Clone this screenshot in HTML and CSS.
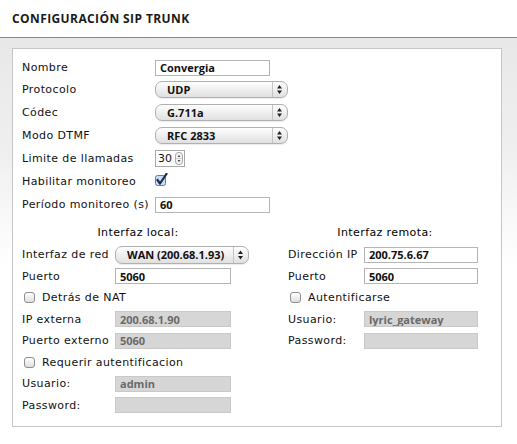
FILE: index.html
```html
<!DOCTYPE html>
<html lang="es">
<head>
  <meta charset="UTF-8">
  <title>Configuración SIP Trunk</title>
  <link rel="stylesheet" href="styles.css">
</head>
<body>
  <h1 class="title">CONFIGURACIÓN SIP TRUNK</h1>

  <div class="content">
    <form class="panel">
      <div class="general">
        <label for="nombre">Nombre</label>
        <input type="text" id="nombre" class="text" value="Convergia">

        <label for="protocolo">Protocolo</label>
        <div class="select">
          <select id="protocolo"><option>UDP</option></select>
          <svg class="arrows" width="16" height="17" viewBox="0 0 16 17"><line x1="0.5" y1="1" x2="0.5" y2="16" stroke="#c4c4c4"/><path d="M5 7.5 L7.5 4 L10 7.5 Z M5 9.5 L7.5 13 L10 9.5 Z" fill="#222"/></svg>
        </div>

        <label for="codec">Códec</label>
        <div class="select">
          <select id="codec"><option>G.711a</option></select>
          <svg class="arrows" width="16" height="17" viewBox="0 0 16 17"><line x1="0.5" y1="1" x2="0.5" y2="16" stroke="#c4c4c4"/><path d="M5 7.5 L7.5 4 L10 7.5 Z M5 9.5 L7.5 13 L10 9.5 Z" fill="#222"/></svg>
        </div>

        <label for="dtmf">Modo DTMF</label>
        <div class="select">
          <select id="dtmf"><option>RFC 2833</option></select>
          <svg class="arrows" width="16" height="17" viewBox="0 0 16 17"><line x1="0.5" y1="1" x2="0.5" y2="16" stroke="#c4c4c4"/><path d="M5 7.5 L7.5 4 L10 7.5 Z M5 9.5 L7.5 13 L10 9.5 Z" fill="#222"/></svg>
        </div>

        <label for="limite">Limite de llamadas</label>
        <div class="spin">
          <input type="text" id="limite" value="30">
          <svg width="9" height="15" viewBox="0 0 9 15"><rect x="0.5" y="0.5" width="8" height="14" rx="4" fill="#f4f4f4" stroke="#9a9a9a"/><line x1="1" y1="7.5" x2="8" y2="7.5" stroke="#c8c8c8"/><path d="M2.8 5.8 L4.5 3.3 L6.2 5.8 Z M2.8 9.2 L4.5 11.7 L6.2 9.2 Z" fill="#555"/></svg>
        </div>

        <label>Habilitar monitoreo</label>
        <svg class="checked" width="13" height="14" viewBox="0 0 13 14"><rect x="0.5" y="2.5" width="10" height="10" rx="2" fill="#c9dcf2" stroke="#5d7fa8"/><path d="M2.5 7 L5 10.5 L11.5 0.8" fill="none" stroke="#1e2f4e" stroke-width="2.2" stroke-linecap="round" stroke-linejoin="round"/></svg>

        <label for="periodo">Período monitoreo (s)</label>
        <input type="text" id="periodo" class="text" value="60">
      </div>

      <div class="interfaces">
        <div class="iface local">
          <h2>Interfaz local:</h2>
          <div class="rows">
            <label for="red">Interfaz de red</label>
            <div class="select wide">
              <select id="red"><option>WAN (200.68.1.93)</option></select>
              <svg class="arrows" width="16" height="18" viewBox="0 0 16 18"><line x1="0.5" y1="1" x2="0.5" y2="17" stroke="#c4c4c4"/><path d="M5 8 L7.5 4.5 L10 8 Z M5 10 L7.5 13.5 L10 10 Z" fill="#222"/></svg>
            </div>

            <label for="puerto-local">Puerto</label>
            <input type="text" id="puerto-local" class="text" value="5060">

            <label class="check-row"><input type="checkbox"> Detrás de NAT</label>

            <label for="ip-externa">IP externa</label>
            <input type="text" id="ip-externa" class="text" value="200.68.1.90" disabled>

            <label for="puerto-externo">Puerto externo</label>
            <input type="text" id="puerto-externo" class="text" value="5060" disabled>

            <label class="check-row"><input type="checkbox"> Requerir autentificacion</label>

            <label for="usuario-local">Usuario:</label>
            <input type="text" id="usuario-local" class="text" value="admin" disabled>

            <label for="password-local">Password:</label>
            <input type="password" id="password-local" class="text" disabled>
          </div>
        </div>

        <div class="iface remote">
          <h2>Interfaz remota:</h2>
          <div class="rows">
            <label for="ip-remota">Dirección IP</label>
            <input type="text" id="ip-remota" class="text" value="200.75.6.67">

            <label for="puerto-remoto">Puerto</label>
            <input type="text" id="puerto-remoto" class="text" value="5060">

            <label class="check-row"><input type="checkbox"> Autentificarse</label>

            <label for="usuario-remoto">Usuario:</label>
            <input type="text" id="usuario-remoto" class="text" value="lyric_gateway" disabled>

            <label for="password-remoto">Password:</label>
            <input type="password" id="password-remoto" class="text" disabled>
          </div>
        </div>
      </div>
    </form>
  </div>
</body>
</html>
```

FILE: styles.css
```css
* {
  box-sizing: border-box;
}

body {
  margin: 0;
  background: #fff;
  font-family: "DejaVu Sans", Verdana, sans-serif;
  font-size: 11px;
  letter-spacing: 0.4px;
  color: #111;
}

.title {
  margin: 0;
  height: 38px;
  padding: 12px 12px 0;
  font-family: "Open Sans", "DejaVu Sans", sans-serif;
  font-size: 12px;
  line-height: 14px;
  font-weight: bold;
  letter-spacing: 0.4px;
  color: #1a1a1a;
  border-bottom: 1px solid #8a8a8a;
}

.content {
  background: linear-gradient(to bottom, #e8e8e9 0, #efefef 110px, #fff 230px);
  padding: 10px 15px 18px 12px;
}

.panel {
  height: 379px;
  border: 1px solid #c6c6c6;
  background: #fff;
  padding: 8px 9px 0;
}

.general {
  display: grid;
  grid-template-columns: 133px auto;
  grid-template-rows: 21px;
  grid-auto-rows: 23px;
  align-items: center;
  justify-items: start;
}

.text {
  width: 115px;
  height: 16px;
  margin: 0;
  padding: 0 4px;
  border: 1px solid #b5b5b5;
  background: #fff;
  font-family: "Open Sans", "DejaVu Sans", sans-serif;
  font-size: 11px;
  font-weight: bold;
  letter-spacing: 0;
  color: #111;
  outline: none;
}

.text:disabled {
  background: #d6d6d6;
  border-color: #c9c9c9;
  color: #6a6a6a;
}

.select {
  position: relative;
  width: 133px;
  height: 17px;
}

.select.wide {
  width: 134px;
  height: 18px;
}

.select select {
  appearance: none;
  width: 100%;
  height: 100%;
  margin: 0;
  padding: 0 0 0 11px;
  border: 1px solid #b0b0b0;
  border-radius: 7px;
  background: linear-gradient(to bottom, #fefefe, #ececec 60%, #e0e0e0);
  box-shadow: 0 1px 1px rgba(0, 0, 0, 0.08);
  font-family: "Open Sans", "DejaVu Sans", sans-serif;
  font-size: 11px;
  font-weight: bold;
  letter-spacing: 0;
  color: #111;
}

.select .arrows {
  position: absolute;
  top: 0;
  right: 0;
  pointer-events: none;
}

.spin {
  display: flex;
  align-items: center;
  justify-content: space-between;
  width: 30px;
  height: 17px;
  padding: 0 1px 0 0;
  border: 1px solid #a8a8a8;
  background: #fff;
}

.spin input {
  width: 19px;
  height: 14px;
  padding: 0 0 0 2px;
  border: none;
  font-family: "DejaVu Sans", Verdana, sans-serif;
  font-size: 11px;
  letter-spacing: 0;
  color: #111;
  outline: none;
}

.checked {
  margin-top: -3px;
}

.interfaces {
  display: flex;
  gap: 34px;
}

.local {
  width: 232px;
}

.remote {
  width: 194px;
}

.iface h2 {
  margin: 0;
  padding: 10px 0 4px;
  font-size: 11px;
  line-height: 14px;
  font-weight: normal;
  text-align: center;
  color: #000;
}

.rows {
  display: grid;
  grid-auto-rows: 21.5px;
  align-items: center;
  justify-items: start;
}

.local .rows {
  grid-template-columns: 93px auto;
}

.local .text {
  width: 116px;
}

.remote .rows {
  grid-template-columns: 76px auto;
}

.remote .text {
  width: 114px;
}

.check-row {
  grid-column: 1 / -1;
  display: flex;
  align-items: center;
  gap: 7px;
  padding-left: 2px;
}

.check-row input {
  appearance: none;
  width: 11px;
  height: 11px;
  margin: 0;
  border: 1px solid #8f8f8f;
  border-radius: 3px;
  background: linear-gradient(to bottom, #fff, #dedede);
}
```
